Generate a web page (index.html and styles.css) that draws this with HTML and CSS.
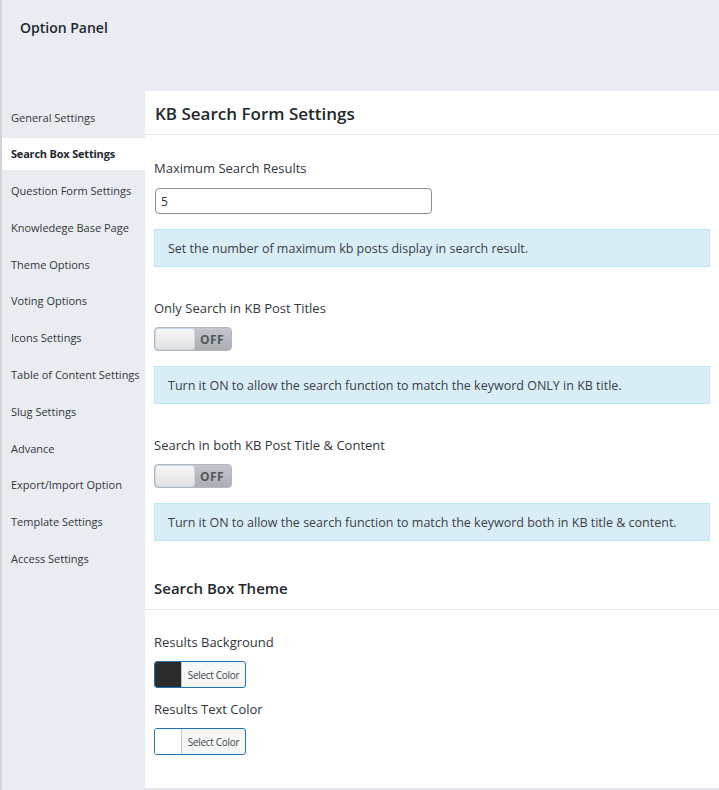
FILE: index.html
```html
<!DOCTYPE html>
<html>
<head>
<meta charset="utf-8">
<link rel="stylesheet" href="styles.css">
</head>
<body>
<div class="page">
  <header class="header"><h1 class="app-title">Option Panel</h1></header>
  <div class="main">
    <nav class="sidebar">
      <a class="nav-item">General Settings</a>
      <a class="nav-item active">Search Box Settings</a>
      <a class="nav-item">Question Form Settings</a>
      <a class="nav-item">Knowledege Base Page</a>
      <a class="nav-item">Theme Options</a>
      <a class="nav-item">Voting Options</a>
      <a class="nav-item">Icons Settings</a>
      <a class="nav-item">Table of Content Settings</a>
      <a class="nav-item">Slug Settings</a>
      <a class="nav-item">Advance</a>
      <a class="nav-item">Export/Import Option</a>
      <a class="nav-item">Template Settings</a>
      <a class="nav-item">Access Settings</a>
    </nav>
    <section class="content">
      <h2 class="section-title">KB Search Form Settings</h2>
      <div class="fields">
        <div class="field">
          <label class="field-label">Maximum Search Results</label>
          <input class="text-input" type="text" value="5">
          <div class="info-box">Set the number of maximum kb posts display in search result.</div>
        </div>
        <div class="field">
          <label class="field-label">Only Search in KB Post Titles</label>
          <div class="toggle"><span class="knob"></span><span class="toggle-text">OFF</span></div>
          <div class="info-box">Turn it ON to allow the search function to match the keyword ONLY in KB title.</div>
        </div>
        <div class="field">
          <label class="field-label">Search in both KB Post Title &amp; Content</label>
          <div class="toggle"><span class="knob"></span><span class="toggle-text">OFF</span></div>
          <div class="info-box">Turn it ON to allow the search function to match the keyword both in KB title &amp; content.</div>
        </div>
      </div>
      <h2 class="section-title sub">Search Box Theme</h2>
      <div class="colors">
        <div class="color-field">
          <label class="field-label">Results Background</label>
          <button class="color-btn"><span class="swatch dark"></span><span class="color-text">Select Color</span></button>
        </div>
        <div class="color-field">
          <label class="field-label">Results Text Color</label>
          <button class="color-btn"><span class="swatch light"></span><span class="color-text">Select Color</span></button>
        </div>
      </div>
    </section>
  </div>
</div>
</body>
</html>
```
FILE: styles.css
```css
* { box-sizing: border-box; }
html, body { margin: 0; padding: 0; }
body {
  background: #e9ecf1;
  font-family: "Open Sans", "Noto Sans", sans-serif;
  color: #2c3338;
  width: 719px;
  height: 790px;
  overflow: hidden;
}
.page {
  border-left: 2px solid #d2d5da;
  height: 790px;
  display: flex;
  flex-direction: column;
}
.header {
  height: 91px;
  padding: 18px 0 0 18px;
}
.app-title {
  margin: 0;
  font-size: 14px;
  font-weight: 600;
  color: #23282d;
  letter-spacing: 0;
}
.main {
  display: flex;
  align-items: flex-start;
}
.sidebar {
  width: 143px;
  padding-top: 10px;
  display: flex;
  flex-direction: column;
  gap: 4.8px;
}
.nav-item {
  display: flex;
  align-items: center;
  height: 32px;
  padding-left: 9px;
  font-size: 11px;
  color: #32373c;
  letter-spacing: 0;
  white-space: nowrap;
}
.nav-item.active {
  background: #fff;
  font-weight: 700;
  color: #23282d;
  letter-spacing: -0.2px;
}
.content {
  flex: 1;
  background: #fff;
  height: 699px;
  border-bottom: 2px solid #e4e6ea;
}
.section-title {
  margin: 0;
  padding: 11px 0 9px 10px;
  font-size: 17px;
  font-weight: 600;
  color: #23282d;
  border-bottom: 1px solid #e8eaed;
  letter-spacing: 0;
  line-height: 23px;
}
.section-title.sub {
  font-size: 15px;
  padding: 8px 0 10px 9px;
  line-height: 21px;
  margin-top: 29px;
}
.fields {
  padding: 24px 9px 0 9px;
  display: flex;
  flex-direction: column;
  gap: 32px;
}
.field {
  display: flex;
  flex-direction: column;
  align-items: flex-start;
}
.field-label {
  font-size: 13px;
  font-weight: 500;
  color: #32373c;
  line-height: 18px;
  letter-spacing: 0;
}
.text-input {
  margin-top: 11px;
  margin-left: 1px;
  width: 277px;
  height: 26px;
  border: 1px solid #8c8f94;
  border-radius: 4px;
  padding: 0 8px 0 5px;
  font-family: inherit;
  font-size: 12px;
  color: #2c3338;
}
.info-box {
  margin-top: 15px;
  width: 556px;
  height: 38px;
  background: #d9edf7;
  border: 1px solid #bce8f1;
  padding: 0 13px;
  display: flex;
  align-items: center;
  font-size: 12.5px;
  color: #3a4046;
  letter-spacing: 0;
}
.toggle {
  margin-top: 10px;
  width: 78px;
  height: 24px;
  border-radius: 4px;
  background: linear-gradient(#c3c6ca, #abafb4);
  border: 1px solid #b3b7bb;
  display: flex;
  align-items: center;
  overflow: hidden;
}
.knob {
  width: 40px;
  height: 22px;
  background: linear-gradient(#f6f6f6, #e1e2e3);
  border: 1px solid #c9d8e4;
  border-radius: 3px;
  box-shadow: -1px 0 0 #9ec2df;
}
.toggle-text {
  flex: 1;
  text-align: center;
  font-size: 12px;
  font-weight: 700;
  color: #52565b;
  letter-spacing: 0.4px;
  padding-right: 2px;
}
.colors {
  padding: 23px 9px 0 9px;
  display: flex;
  flex-direction: column;
  gap: 12px;
}
.color-field {
  display: flex;
  flex-direction: column;
  align-items: flex-start;
  gap: 10px;
}
.color-btn {
  display: flex;
  padding: 0;
  width: 92px;
  height: 27px;
  border: 1px solid #2271b1;
  border-radius: 3px;
  background: #f6f7f7;
  overflow: hidden;
  cursor: pointer;
  font-family: inherit;
}
.swatch {
  width: 27px;
  height: 100%;
  border-right: 1px solid #c3c4c7;
}
.swatch.dark { background: #2b2b2b; }
.swatch.light { background: #ffffff; }
.color-text {
  flex: 1;
  display: flex;
  align-items: center;
  justify-content: center;
  font-family: inherit;
  font-size: 10px;
  color: #3c434a;
  letter-spacing: -0.3px;
  padding-top: 1px;
}
```
